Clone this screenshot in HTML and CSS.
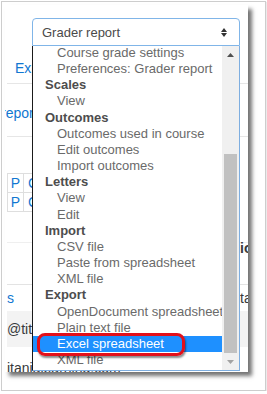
FILE: index.html
```html
<!DOCTYPE html>
<html lang="en">
<head>
  <meta charset="UTF-8">
  <title>Grader report - export menu</title>
  <link rel="stylesheet" href="styles.css">
</head>
<body>
  <div class="frame">
    <div class="shot">
      <!-- page behind the open menu -->
      <div class="page">
        <div class="tabs"><span class="link tab">Export</span></div>
        <div class="crumbs"><span class="link crumb">report</span></div>
        <table class="grid">
          <tr><td class="cell-p">P</td><td class="cell-c">C</td></tr>
          <tr><td class="cell-p">P</td><td class="cell-c">C</td></tr>
        </table>
        <div class="head-row">
          <span></span>
          <span class="right bold">ion</span>
        </div>
        <div class="user-row">
          <span class="link">s</span>
          <span class="right">ta</span>
        </div>
        <div class="grey-row">@titanialearning.com</div>
        <div class="plain-row">itanialearning.com</div>
      </div>

      <!-- the open select -->
      <div class="menu">
        <div class="select">
          <span>Grader report</span>
          <svg class="updown" width="6" height="9" viewBox="0 0 6 9"><path d="M0 4L3 0L6 4Z M0 5L3 9L6 5Z" fill="#333"/></svg>
        </div>
        <div class="popup">
          <div class="list">
            <div class="opt">Course grade settings</div>
            <div class="opt">Preferences: Grader report</div>
            <div class="group">Scales</div>
            <div class="opt">View</div>
            <div class="group">Outcomes</div>
            <div class="opt">Outcomes used in course</div>
            <div class="opt">Edit outcomes</div>
            <div class="opt">Import outcomes</div>
            <div class="group">Letters</div>
            <div class="opt">View</div>
            <div class="opt">Edit</div>
            <div class="group">Import</div>
            <div class="opt">CSV file</div>
            <div class="opt">Paste from spreadsheet</div>
            <div class="opt">XML file</div>
            <div class="group">Export</div>
            <div class="opt">OpenDocument spreadsheet</div>
            <div class="opt">Plain text file</div>
            <div class="opt selected">Excel spreadsheet</div>
            <div class="opt">XML file</div>
          </div>
          <div class="scrollbar">
            <div class="sb-btn"><svg width="7" height="4" viewBox="0 0 7 4"><path d="M0 4L3.5 0L7 4Z" fill="#505050"/></svg></div>
            <div class="sb-track"><div class="sb-thumb"></div></div>
            <div class="sb-btn"><svg width="7" height="4" viewBox="0 0 7 4"><path d="M0 0L3.5 4L7 0Z" fill="#a3a3a3"/></svg></div>
          </div>
        </div>
        <div class="callout"></div>
      </div>
    </div>
  </div>
</body>
</html>
```

FILE: styles.css
```css
/* base */
body {
  margin: 0;
  background: #fff;
  font-family: "Liberation Sans", Arial, sans-serif;
}

.frame {
  margin: 1px 0 0 1px;
  width: 265px;
  height: 390px;
  box-sizing: border-box;
  border: 1px solid #cdcdcd;
  padding: 3px;
  box-shadow: 1px 1px 1px rgba(0, 0, 0, 0.08);
}

.shot {
  position: relative;
  width: 243px;
  height: 367px;
  overflow: hidden;
  background: #fff;
  box-shadow: 4px 4px 4px rgba(0, 0, 0, 0.55);
}

/* page content behind the menu */
.page {
  padding-left: 2px;
  font-size: 14px;
  line-height: 16px;
  color: #373a3c;
}

.link {
  color: #1177d1;
}

.tabs {
  height: 78px;
  border-bottom: 1px solid #e6e6e6;
}

.tab {
  display: inline-block;
  margin: 55px 0 0 8px;
}

.crumbs {
  height: 52px;
  border-bottom: 1px solid #e6e6e6;
}

.crumb {
  display: inline-block;
  margin: 21px 0 0 -6px;
}

.grid {
  margin-top: 36px;
  border-collapse: collapse;
}

.grid td {
  height: 18px;
  padding: 0;
  border: 1px solid #dedede;
  color: #1177d1;
}

.cell-p {
  width: 15px;
  text-align: center;
}

.cell-c {
  width: 30px;
  padding-left: 4px !important;
}

.head-row,
.user-row {
  display: grid;
  grid-template-columns: 233px 1fr;
}

.head-row {
  margin-top: 30px;
  height: 41px;
  border-top: 1px solid #efefef;
  border-bottom: 1px solid #e3e3e3;
}

.head-row .right {
  margin-top: -3px;
}

.right {
  white-space: nowrap;
}

.bold {
  font-weight: bold;
}

.user-row {
  height: 21px;
  padding-top: 5px;
}

.grey-row {
  height: 26px;
  padding-top: 10px;
  background: #f3f3f3;
  white-space: nowrap;
}

.plain-row {
  padding-top: 13px;
  white-space: nowrap;
}

/* the open select */
.menu {
  position: absolute;
  left: 27px;
  top: 13px;
  width: 208px;
  font-size: 13px;
}

.select {
  height: 28px;
  box-sizing: border-box;
  border: 1px solid #80b5e8;
  border-radius: 4px 4px 0 0;
  background: #fff;
  display: flex;
  align-items: center;
  justify-content: space-between;
  padding: 0 12px 0 9px;
  color: #4a4a4a;
}

.updown {
  display: block;
}

.popup {
  display: flex;
  height: 325px;
  box-sizing: border-box;
  background: #fff;
  border-left: 1px solid #1a1a1a;
  border-right: 1px solid #7eaee0;
  border-bottom: 1px solid #7eaee0;
}

.list {
  width: 189px;
  overflow: hidden;
  line-height: 16.16px;
}

.list > div:first-child {
  margin-top: -1px;
}

.group {
  padding-left: 12px;
  font-weight: bold;
  color: #4d4d4d;
}

.opt {
  padding-left: 24px;
  color: #6a6a6a;
  white-space: nowrap;
}

.opt.selected {
  background: #1e90ff;
  color: #fff;
}

.scrollbar {
  width: 17px;
  display: flex;
  flex-direction: column;
  background: #f0f0f0;
}

.sb-btn {
  height: 17px;
  display: flex;
  align-items: center;
  justify-content: center;
}

.sb-track {
  flex: 1;
  display: flex;
  flex-direction: column;
  justify-content: flex-end;
}

.sb-thumb {
  height: 199px;
  margin: 0 2px;
  background: #c1c1c1;
}

/* red annotation ring */
.callout {
  position: absolute;
  left: 5px;
  top: 315px;
  width: 148px;
  height: 23px;
  box-sizing: border-box;
  border: 3px solid #e3101a;
  border-radius: 8px;
  box-shadow: 1px 2px 2px rgba(0, 0, 0, 0.45);
}
```
